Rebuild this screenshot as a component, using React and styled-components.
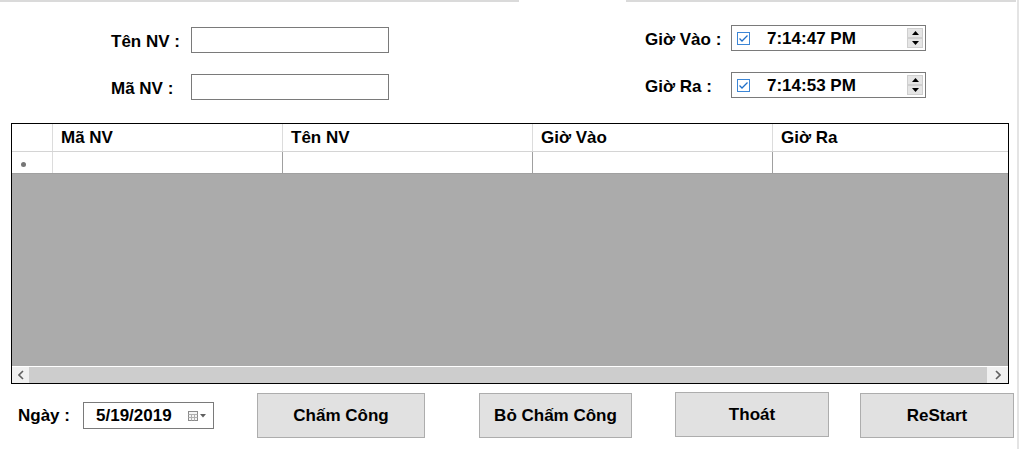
import styled, { createGlobalStyle } from "styled-components";

const GlobalStyle = createGlobalStyle`
  html, body {
    margin: 0;
    padding: 0;
    background: #ffffff;
  }
  body {
    font-family: "Liberation Sans", Arial, sans-serif;
    color: #000000;
  }
`;

// cột của bảng chấm công
const columns = [
  { key: "ma", title: "Mã NV" },
  { key: "ten", title: "Tên NV" },
  { key: "vao", title: "Giờ Vào" },
  { key: "ra", title: "Giờ Ra" },
];

const GRID_COLS = "41px 230px 250px 240px 1fr";

function TimePicker({ value }) {
  return (
    <PickerBox>
      <CheckBox>
        <svg width="11" height="11" viewBox="0 0 11 11">
          <polyline
            points="1.5,5.5 4,8 9.5,2.5"
            fill="none"
            stroke="#1f6fc8"
            strokeWidth="1.3"
          />
        </svg>
      </CheckBox>
      <TimeText>{value}</TimeText>
      <Spinner>
        <SpinButton>
          <svg width="7" height="4" viewBox="0 0 7 4">
            <polygon points="3.5,0 7,4 0,4" fill="#000" />
          </svg>
        </SpinButton>
        <SpinButton>
          <svg width="7" height="4" viewBox="0 0 7 4">
            <polygon points="0,0 7,0 3.5,4" fill="#000" />
          </svg>
        </SpinButton>
      </Spinner>
    </PickerBox>
  );
}

function Chevron({ dir }) {
  const pts = dir === "left" ? "5,1 1,5 5,9" : "1,1 5,5 1,9";
  return (
    <svg width="6" height="10" viewBox="0 0 6 10">
      <polyline points={pts} fill="none" stroke="#606060" strokeWidth="1.6" />
    </svg>
  );
}

export default function App() {
  return (
    <>
      <GlobalStyle />
      <Frame>
        <TopRule>
          <RuleSeg $width="519px" />
          <RuleGap />
          <RuleSeg />
        </TopRule>

        <FormArea>
          <FieldGrid $labelCol="80px" $fieldCol="198px" $offset="2px">
            <Label>Tên NV :</Label>
            <TextBox />
            <Label>Mã NV :</Label>
            <TextBox />
          </FieldGrid>

          <FieldGrid $labelCol="86px" $fieldCol="195px" $push>
            <Label>Giờ Vào :</Label>
            <TimePicker value="7:14:47 PM" />
            <Label>Giờ Ra :</Label>
            <TimePicker value="7:14:53 PM" />
          </FieldGrid>
        </FormArea>

        <DataGrid>
          <GridRow $header>
            <Cell $header />
            {columns.map((c) => (
              <Cell key={c.key} $header>
                {c.title}
              </Cell>
            ))}
          </GridRow>
          <GridRow>
            <Cell $rowHead>
              <NewRowMark />
            </Cell>
            {columns.map((c) => (
              <Cell key={c.key} />
            ))}
          </GridRow>
          <EmptyArea />
          <ScrollBar>
            <ScrollButton $width="17px">
              <Chevron dir="left" />
            </ScrollButton>
            <ScrollThumb />
            <ScrollButton $width="21px">
              <Chevron dir="right" />
            </ScrollButton>
          </ScrollBar>
        </DataGrid>

        <BottomRow>
          <BottomLabel>Ngày :</BottomLabel>
          <DateBox>
            <span>5/19/2019</span>
            <DateIcon>
              <svg width="10" height="10" viewBox="0 0 10 10">
                <rect x="0.5" y="0.5" width="9" height="9" fill="#f4f4f4" stroke="#8a8a8a" />
                <line x1="0.5" y1="3.5" x2="9.5" y2="3.5" stroke="#b0b0b0" />
                <line x1="0.5" y1="6.5" x2="9.5" y2="6.5" stroke="#b0b0b0" />
                <line x1="3.5" y1="3.5" x2="3.5" y2="9.5" stroke="#b0b0b0" />
                <line x1="6.5" y1="3.5" x2="6.5" y2="9.5" stroke="#b0b0b0" />
              </svg>
              <svg width="6" height="4" viewBox="0 0 6 4">
                <polygon points="0,0 6,0 3,3.5" fill="#606060" />
              </svg>
            </DateIcon>
          </DateBox>
          <ActionButton $gap="43px" $width="168px">Chấm Công</ActionButton>
          <ActionButton $gap="54px" $width="153px">Bỏ Chấm Công</ActionButton>
          <ActionButton $gap="43px" $width="154px" $lift>
            Thoát
          </ActionButton>
          <ActionButton $gap="31px" $width="154px">ReStart</ActionButton>
        </BottomRow>
      </Frame>
    </>
  );
}

const Frame = styled.div`
  width: 1019px;
  height: 449px;
  box-sizing: border-box;
  border-right: 2px solid #e4e4e4;
  background: #ffffff;
  display: flex;
  flex-direction: column;
  overflow: hidden;
`;

const TopRule = styled.div`
  display: flex;
  height: 2px;
  margin-right: 1px;
`;

const RuleSeg = styled.div`
  background: #dadada;
  flex: ${({ $width }) => ($width ? `0 0 ${$width}` : "1")};
`;

const RuleGap = styled.div`
  flex: 0 0 107px;
`;

const FormArea = styled.div`
  display: flex;
  align-items: flex-start;
  padding-top: 23px;
  padding-left: 111px;
  padding-right: 91px;
`;

const FieldGrid = styled.div`
  display: grid;
  grid-template-columns: ${({ $labelCol, $fieldCol }) => `${$labelCol} ${$fieldCol}`};
  grid-auto-rows: 26px;
  row-gap: 21px;
  margin-top: ${({ $offset }) => $offset || "0"};
  margin-left: ${({ $push }) => ($push ? "auto" : "0")};
`;

const Label = styled.div`
  display: flex;
  align-items: center;
  padding-top: 3px;
  font-size: 17px;
  font-weight: bold;
  white-space: nowrap;
`;

const TextBox = styled.div`
  box-sizing: border-box;
  border: 1px solid #7a7a7a;
  background: #ffffff;
`;

const PickerBox = styled.div`
  box-sizing: border-box;
  border: 1px solid #7a7a7a;
  background: #ffffff;
  display: flex;
  align-items: center;
  padding-left: 5px;
  padding-right: 2px;
`;

const CheckBox = styled.div`
  box-sizing: border-box;
  width: 13px;
  height: 13px;
  border: 1px solid #3c86d6;
  display: flex;
  align-items: center;
  justify-content: center;
  margin-top: 1px;
`;

const TimeText = styled.span`
  margin-left: 17px;
  font-size: 17px;
  font-weight: bold;
  padding-top: 1px;
  flex: 1;
`;

const Spinner = styled.div`
  display: flex;
  flex-direction: column;
  width: 16px;
  height: 20px;
`;

const SpinButton = styled.div`
  flex: 1;
  box-sizing: border-box;
  background: #e5e5e5;
  border: 1px solid #cfcfcf;
  display: flex;
  align-items: center;
  justify-content: center;
`;

const DataGrid = styled.div`
  box-sizing: border-box;
  margin-top: 23px;
  margin-left: 11px;
  width: 998px;
  height: 261px;
  border: 1px solid #000000;
  display: flex;
  flex-direction: column;
`;

const GridRow = styled.div`
  display: grid;
  grid-template-columns: ${GRID_COLS};
  height: ${({ $header }) => ($header ? "28px" : "22px")};
  box-sizing: border-box;
  border-bottom: 1px solid ${({ $header }) => ($header ? "#d4d4d4" : "#a0a0a0")};
  background: #ffffff;
`;

const Cell = styled.div`
  box-sizing: border-box;
  border-right: 1px solid
    ${({ $header, $rowHead }) => ($header || $rowHead ? "#dcdcdc" : "#a0a0a0")};
  padding-left: 8px;
  display: flex;
  align-items: center;
  font-size: 17px;
  font-weight: bold;
  white-space: nowrap;

  &:last-child {
    border-right: none;
  }
`;

const NewRowMark = styled.span`
  width: 5px;
  height: 5px;
  border-radius: 50%;
  background: #767676;
  margin-left: 1px;
  margin-top: 3px;
`;

const EmptyArea = styled.div`
  flex: 1;
  background: #ababab;
  border-bottom: 1px solid #ffffff;
`;

const ScrollBar = styled.div`
  display: flex;
  height: 16px;
  background: #f0f0f0;
`;

const ScrollButton = styled.div`
  flex: 0 0 ${({ $width }) => $width};
  display: flex;
  align-items: center;
  justify-content: center;
`;

const ScrollThumb = styled.div`
  flex: 1;
  background: #cdcdcd;
`;

const BottomRow = styled.div`
  display: flex;
  align-items: center;
  margin-top: 9px;
  padding-left: 18px;
  height: 45px;
`;

const BottomLabel = styled.span`
  width: 65px;
  font-size: 17px;
  font-weight: bold;
  padding-top: 1px;
`;

const DateBox = styled.div`
  box-sizing: border-box;
  width: 131px;
  height: 27px;
  border: 1px solid #7a7a7a;
  display: flex;
  align-items: center;
  padding-left: 12px;
  font-size: 17px;
  font-weight: bold;
`;

const DateIcon = styled.span`
  display: flex;
  align-items: center;
  gap: 2px;
  margin-left: 16px;
`;

const ActionButton = styled.button`
  box-sizing: border-box;
  width: ${({ $width }) => $width};
  height: 45px;
  margin-left: ${({ $gap }) => $gap};
  margin-top: ${({ $lift }) => ($lift ? "-2px" : "0")};
  background: #e1e1e1;
  border: 1px solid #adadad;
  border-radius: 0;
  font-family: "Liberation Sans", Arial, sans-serif;
  font-size: 17px;
  font-weight: bold;
  color: #000000;
  padding: 0;
  cursor: pointer;
`;
